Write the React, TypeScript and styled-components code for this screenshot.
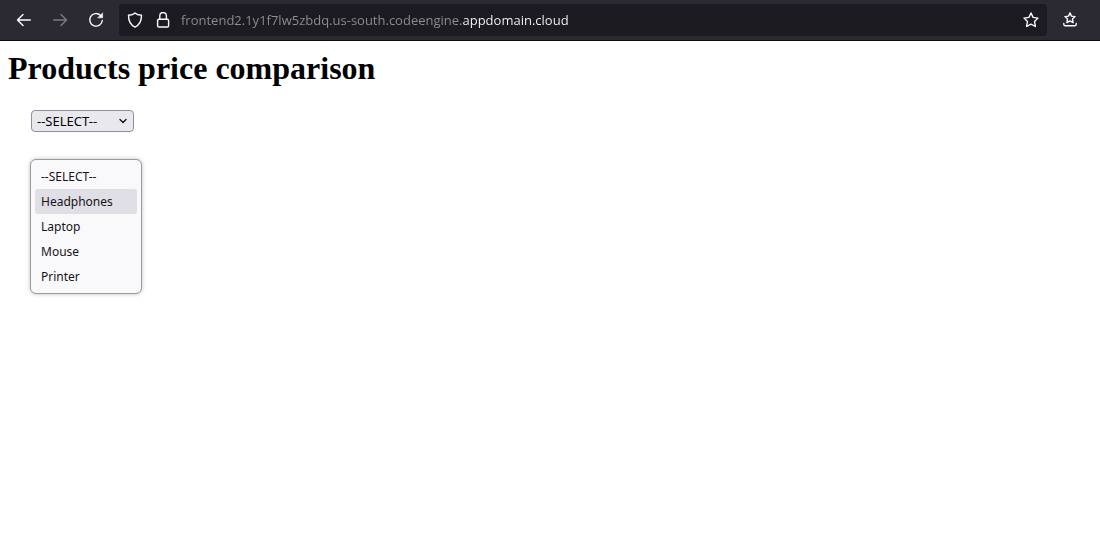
import React, { useState } from "react";
import styled, { createGlobalStyle } from "styled-components";

const GlobalStyle = createGlobalStyle`
  * { box-sizing: border-box; }
  body { margin: 0; background: #fff; color: #000; font-family: "Liberation Serif", serif; }
`;

const Toolbar = styled.header`
  display: flex;
  align-items: center;
  gap: 4px;
  height: 41px;
  padding: 0 14px 1px 8px;
  background: #2b2a33;
  border-bottom: 1px solid #0c0c0d;
`;

const ToolButton = styled.button`
  display: flex;
  flex: none;
  align-items: center;
  justify-content: center;
  width: 32px;
  height: 32px;
  padding: 0;
  border: 0;
  border-radius: 4px;
  background: transparent;
  color: #fbfbfe;

  &:disabled { color: #7c7b82; }
`;

const AddressBar = styled.form`
  display: flex;
  flex: 1;
  align-items: center;
  height: 32px;
  margin: 0 3px;
  border-radius: 4px;
  background: #1c1b22;
`;

const BarButton = styled(ToolButton)<{ $width?: number }>`
  width: ${(p) => p.$width ?? 32}px;
`;

const AddressInput = styled.input`
  flex: 1;
  min-width: 0;
  height: 24px;
  margin-left: 6px;
  padding: 0;
  border: 0;
  outline: 0;
  font: 13px/24px "Open Sans", "Noto Sans", sans-serif;
  color: #fbfbfe;
  background: linear-gradient(to right, #8f8e95 281px, #fbfbfe 281px);
  background-clip: text;
  -webkit-text-fill-color: transparent;
`;

const Page = styled.main`
  padding: 9px 8px;
`;

const Title = styled.h1`
  margin: 0 0 23px;
  font-size: 32px;
  line-height: 37px;
  font-weight: 700;
`;

const Picker = styled.div`
  display: flex;
  flex-direction: column;
  align-items: flex-start;
  gap: 27px;
  padding-left: 22px;
`;

const SelectFrame = styled.label`
  display: grid;
  align-items: center;
  margin-left: 1px;
  color: #15141a;
  > * { grid-area: 1 / 1; }
  > svg { justify-self: end; margin-right: 6px; pointer-events: none; }
`;

const ProductSelect = styled.select`
  appearance: none;
  width: 103px;
  height: 22px;
  padding: 0 20px 0 5px;
  border: 1px solid #8f8f9d;
  border-radius: 4px;
  background: #e9e9ed;
  color: #000;
  font: 13px/20px "Noto Sans", sans-serif;
`;

const Menu = styled.ul`
  width: 112px;
  margin: 0;
  padding: 4px;
  list-style: none;
  border: 1px solid #9a9a9f;
  border-radius: 6px;
  background: #f9f9fb;
  box-shadow: 0 0 4px rgba(0, 0, 0, 0.25);
`;

const MenuOption = styled.button<{ $active: boolean }>`
  display: block;
  width: 100%;
  height: 25px;
  padding: 0 6px;
  border: 0;
  border-radius: 3px;
  background: ${(p) => (p.$active ? "#e0dfe6" : "transparent")};
  color: #15141a;
  font: 12px/25px "Noto Sans", sans-serif;
  text-align: left;
`;

const Icon = ({ children, size = 16 }: { children: React.ReactNode; size?: number }) => (
  <svg width={size} height={size} viewBox={`0 0 ${size} ${size}`} fill="none" stroke="currentColor"
    strokeWidth="1.4" strokeLinecap="round" strokeLinejoin="round" aria-hidden="true">
    {children}
  </svg>
);

const products = ["--SELECT--", "Headphones", "Laptop", "Mouse", "Printer"];

export default function App() {
  const [selected, setSelected] = useState(products[0]);
  const [active, setActive] = useState("Headphones");
  const [address, setAddress] = useState("frontend2.1y1f7lw5zbdq.us-south.codeengine.appdomain.cloud");

  return (
    <>
      <GlobalStyle />
      <Toolbar>
        <ToolButton aria-label="Back">
          <Icon><path d="M14.3 8H1.8M7 2.5 1.5 8 7 13.5" /></Icon>
        </ToolButton>
        <ToolButton aria-label="Forward" disabled>
          <Icon><path d="M1.7 8h12.5M9 2.5 14.5 8 9 13.5" /></Icon>
        </ToolButton>
        <ToolButton aria-label="Reload">
          <Icon>
            <path d="M12.4 3.3A6.3 6.3 0 1 0 14.3 8.5" />
            <path d="M14.6 1.2v4.6H10z" fill="currentColor" strokeWidth="0.6" />
          </Icon>
        </ToolButton>
        <AddressBar onSubmit={(e) => e.preventDefault()}>
          <BarButton type="button" aria-label="Tracking protection">
            <Icon><path d="M8 .9C6.4 2.4 4.2 3 1.5 3.3c0 5.8 1.6 9.6 6.5 11.8 4.9-2.2 6.5-6 6.5-11.8C11.8 3 9.6 2.4 8 .9z" /></Icon>
          </BarButton>
          <BarButton type="button" aria-label="Connection secure" $width={24}>
            <Icon>
              <rect x="2.6" y="7.3" width="11" height="7.7" rx="1.3" />
              <path d="M4.8 7V3.8a3.3 3.3 0 0 1 6.6 0V7" />
            </Icon>
          </BarButton>
          <AddressInput aria-label="Address" value={address} spellCheck={false}
            onChange={(e) => setAddress(e.target.value)} />
          <BarButton type="button" aria-label="Bookmark this page">
            <Icon><path d="m8 1 2.1 4.4 4.9.7-3.5 3.4.9 5-4.4-2.4-4.4 2.4.9-5L1 6.1l4.9-.7z" /></Icon>
          </BarButton>
        </AddressBar>
        <ToolButton aria-label="Bookmarks">
          <Icon>
            <path d="m8 .9 1.5 3.2 3.5.5-2.5 2.5.6 3.5L8 8.9l-3.1 1.7.6-3.5L3 4.6l3.5-.5z" />
            <path d="M1.8 11.5v.7c0 1 .6 1.6 1.6 1.6h9.2c1 0 1.6-.6 1.6-1.6v-.7" />
          </Icon>
        </ToolButton>
      </Toolbar>
      <Page>
        <Title>Products price comparison</Title>
        <Picker>
          <SelectFrame>
            <ProductSelect aria-label="Product" value={selected} onChange={(e) => setSelected(e.target.value)}>
              {products.map((name) => <option key={name}>{name}</option>)}
            </ProductSelect>
            <Icon size={10}><path d="m2 3.5 3 3 3-3" /></Icon>
          </SelectFrame>
          <Menu aria-label="Products">
            {products.map((name) => (
              <li key={name}>
                <MenuOption type="button" $active={name === active}
                  onMouseEnter={() => setActive(name)} onClick={() => setSelected(name)}>
                  {name}
                </MenuOption>
              </li>
            ))}
          </Menu>
        </Picker>
      </Page>
    </>
  );
}
